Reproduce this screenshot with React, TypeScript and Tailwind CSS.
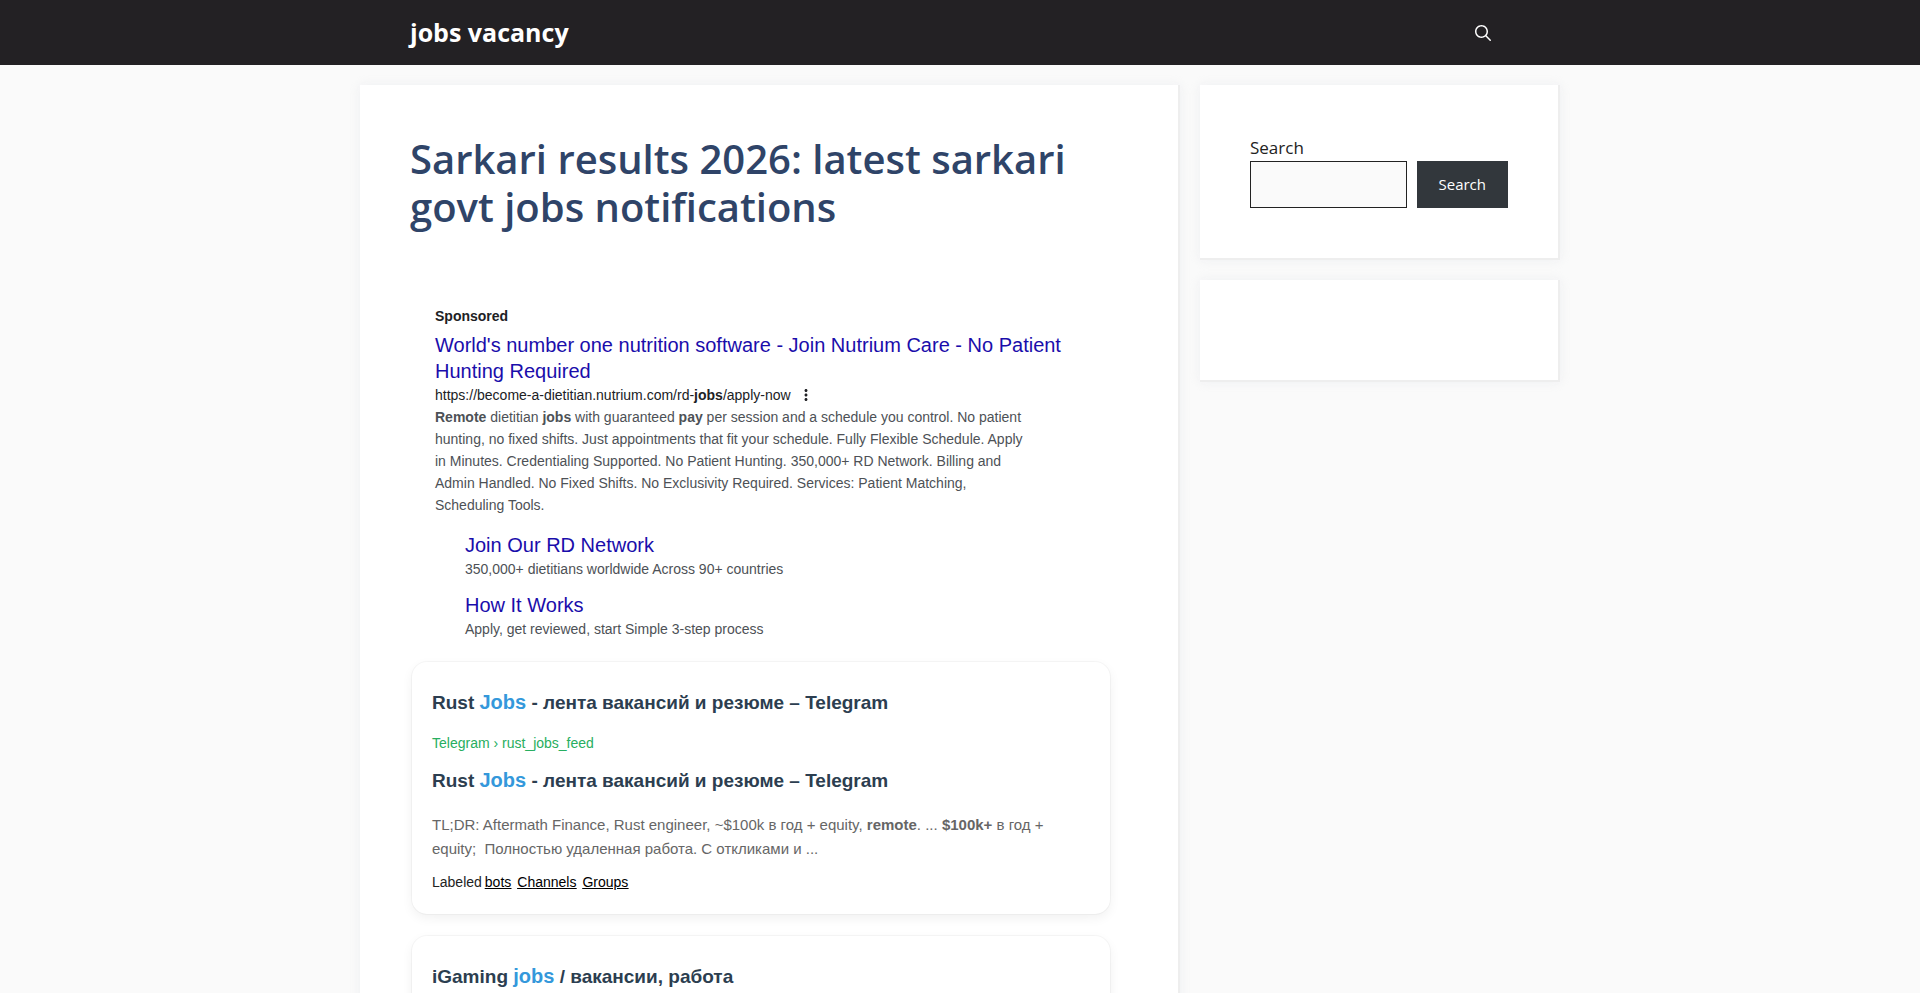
import type { ReactNode } from "react";

const panel =
  "border-r-2 border-b-2 border-[#eeeeee] bg-white shadow-[0_0_10px_rgba(232,234,237,0.6)]";

function SearchIcon() {
  return (
    <svg viewBox="0 0 512 512" aria-hidden="true" className="size-4" fill="currentColor">
      <path
        fillRule="evenodd"
        clipRule="evenodd"
        d="M208 48c-88.366 0-160 71.634-160 160s71.634 160 160 160 160-71.634 160-160S296.366 48 208 48zM0 208C0 93.125 93.125 0 208 0s208 93.125 208 208c0 48.741-16.765 93.566-44.843 129.024l133.826 134.018c9.366 9.379 9.355 24.575-.025 33.941-9.379 9.366-24.575 9.355-33.941-.025L337.238 370.987C301.747 399.167 256.839 416 208 416 93.125 416 0 322.875 0 208z"
      />
    </svg>
  );
}

function MoreIcon() {
  return (
    <svg viewBox="0 0 24 24" aria-hidden="true" className="size-[18px]" fill="currentColor">
      <path d="M12 8c1.1 0 2-.9 2-2s-.9-2-2-2-2 .9-2 2 .9 2 2 2zm0 2c-1.1 0-2 .9-2 2s.9 2 2 2 2-.9 2-2-.9-2-2-2zm0 6c-1.1 0-2 .9-2 2s.9 2 2 2 2-.9 2-2-.9-2-2-2z" />
    </svg>
  );
}

function SiteLink({ title, text }: { title: string; text: string }) {
  return (
    <li>
      <a href="#" className="block text-xl/[26px] text-[#1a0dab]">
        {title}
      </a>
      <p className="text-sm/[22px] text-[#4d5156]">{text}</p>
    </li>
  );
}

function Sponsored() {
  return (
    <section className="px-[25px]">
      <p className="text-sm/[22px] font-bold text-[#202124]">Sponsored</p>
      <h2 className="mt-[5px] text-xl/[26px] text-[#1a0dab]">
        <a href="#">
          World's number one nutrition software - Join Nutrium Care - No Patient Hunting Required
        </a>
      </h2>
      <div className="flex items-center gap-1.5 text-sm/[22px] text-[#202124]">
        <span>
          https://become-a-dietitian.nutrium.com/rd-<b>jobs</b>/apply-now
        </span>
        <button type="button" aria-label="About this result">
          <MoreIcon />
        </button>
      </div>
      <p className="max-w-[600px] text-sm/[22px] text-[#4d5156]">
        <b>Remote</b> dietitian <b>jobs</b> with guaranteed <b>pay</b> per session and a schedule
        you control. No patient hunting, no fixed shifts. Just appointments that fit your schedule.
        Fully Flexible Schedule. Apply in Minutes. Credentialing Supported. No Patient Hunting.
        350,000+ RD Network. Billing and Admin Handled. No Fixed Shifts. No Exclusivity Required.
        Services: Patient Matching, Scheduling Tools.
      </p>
      <ul className="mt-4 flex flex-col gap-3 pl-[30px]">
        <SiteLink title="Join Our RD Network" text="350,000+ dietitians worldwide Across 90+ countries" />
        <SiteLink title="How It Works" text="Apply, get reviewed, start Simple 3-step process" />
      </ul>
    </section>
  );
}

function Card({ children }: { children: ReactNode }) {
  return (
    <article className="w-full max-w-[698px] rounded-[15px] bg-white px-5 pt-6 pb-5 shadow-[0_4px_12px_rgba(0,0,0,0.06)] ring-1 ring-black/3">
      {children}
    </article>
  );
}

function CardTitle({ children }: { children: ReactNode }) {
  return <h3 className="text-[19px]/8 font-bold text-[#2c3e50]">{children}</h3>;
}

function Mark({ children }: { children: ReactNode }) {
  return <span className="text-xl/8 font-bold text-[#3498db]">{children}</span>;
}

export default function App() {
  return (
    <div className="h-screen overflow-hidden bg-[#fafafa] font-['Open_Sans',sans-serif] text-[#222222]">
      <header className="bg-[#232124] text-white">
        <div className="mx-auto flex h-[65px] max-w-[1200px] items-center justify-between px-[50px]">
          <a href="#" className="pb-0.5 text-[25px]/8 font-bold">
            jobs vacancy
          </a>
          <button type="button" aria-label="Open search" className="px-[19px]">
            <SearchIcon />
          </button>
        </div>
      </header>

      <div className="mx-auto flex max-w-[1200px] items-start gap-5 pt-5">
        <main className={`${panel} min-w-0 flex-1 p-[50px]`}>
          <h1 className="text-[40px]/12 font-semibold text-[#2f4468]">
            Sarkari results 2026: latest sarkari govt jobs notifications
          </h1>
          <div className="mt-[74px] font-['Liberation_Sans',sans-serif]">
            <Sponsored />
            <div className="mt-[22px] flex flex-col gap-[22px] px-0.5">
              <Card>
                <CardTitle>
                  Rust <Mark>Jobs</Mark> - лента вакансий и резюме – Telegram
                </CardTitle>
                <p className="mt-3 text-sm/6 text-[#27ae60]">Telegram › rust_jobs_feed</p>
                <div className="mt-[9px]">
                  <CardTitle>
                    Rust <Mark>Jobs</Mark> - лента вакансий и резюме – Telegram
                  </CardTitle>
                </div>
                <p className="mt-4 text-[15px]/6 text-[#666666]">
                  TL;DR: Aftermath Finance, Rust engineer, ~$100k в год + equity, <b>remote</b>. ...{" "}
                  <b>$100k+</b> в год + equity;&nbsp; Полностью удаленная работа. С откликами и ...
                </p>
                <p className="mt-[9px] flex items-center text-sm/6 text-[#222222]">
                  <span className="mr-[3px]">Labeled</span>
                  <span className="flex gap-1.5 text-black underline">
                    <a href="#">bots</a>
                    <a href="#">Channels</a>
                    <a href="#">Groups</a>
                  </span>
                </p>
              </Card>
              <Card>
                <CardTitle>
                  iGaming <Mark>jobs</Mark> / вакансии, работа
                </CardTitle>
              </Card>
            </div>
          </div>
        </main>

        <aside className="flex w-[360px] shrink-0 flex-col gap-5">
          <div className={`${panel} p-[50px]`}>
            <form onSubmit={(e) => e.preventDefault()}>
              <label htmlFor="site-search" className="block text-[17px]/[26px]">
                Search
              </label>
              <div className="flex gap-2.5">
                <input
                  id="site-search"
                  type="search"
                  className="h-[47px] min-w-0 flex-1 border border-[#222222] bg-[#fafafa] px-2"
                />
                <button
                  type="submit"
                  className="bg-[#32373c] px-[22px] pb-0.5 text-[15px]/6 text-white"
                >
                  Search
                </button>
              </div>
            </form>
          </div>
          <div className={`${panel} p-[50px]`} />
        </aside>
      </div>
    </div>
  );
}
